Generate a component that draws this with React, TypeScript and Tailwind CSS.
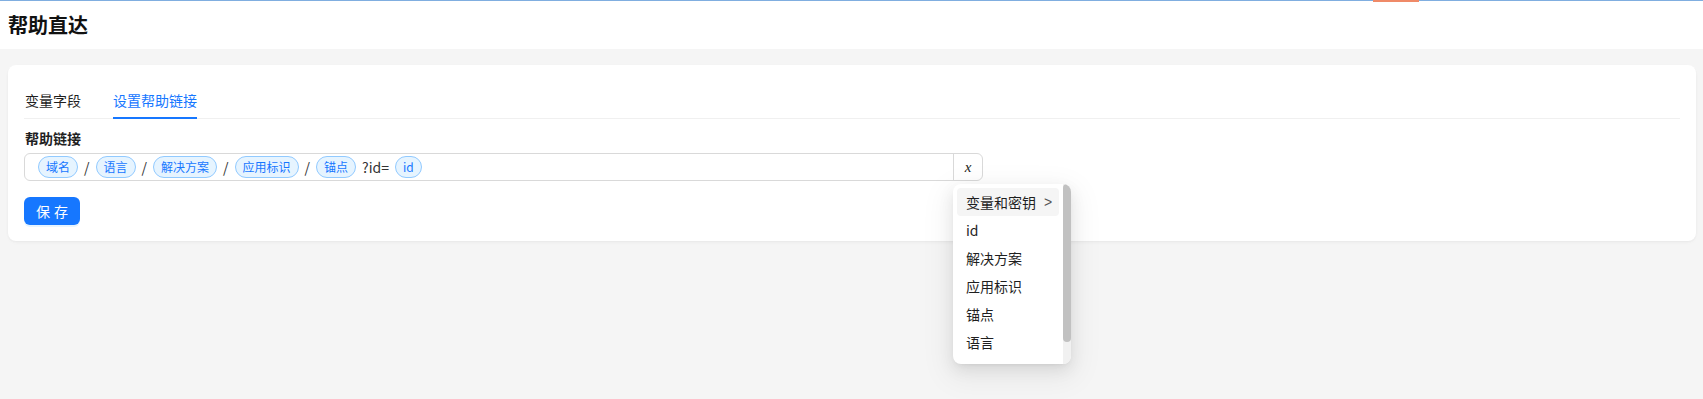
import React from "react";

const FONT = { fontFamily: '"Noto Sans CJK SC", "Noto Sans", sans-serif' };

function Tag({ children }: { children: React.ReactNode }) {
  return (
    <span className="inline-flex h-[22px] items-center rounded-full border border-[#91caff] bg-[#e6f4ff] px-[7px] text-[12px] leading-[20px] text-[#1677ff]">
      {children}
    </span>
  );
}

function Slash() {
  return <span className="text-[14px] leading-[22px] text-[#333]">/</span>;
}

const items = ["id", "解决方案", "应用标识", "锚点", "语言", "域名"];

export default function App() {
  return (
    <div className="min-h-screen bg-[#f5f5f5] text-[#1f1f1f]" style={FONT}>
      <div className="relative h-[49px] border-t border-[#80aee0] bg-white">
        <div className="absolute left-[1373px] top-[-1px] h-[2px] w-[46px] bg-[#ef8a68]" />
        <div className="flex h-full items-center pl-[8px] pb-[1px]">
          <h1 className="text-[20px] font-bold leading-[28px] text-[#111]">帮助直达</h1>
        </div>
      </div>

      <div className="pl-[8px] pr-[7px] pt-[16px]">
        <div className="rounded-[8px] bg-white px-[16px] pt-[16px] pb-[16px] shadow-[0_1px_2px_0_rgba(0,0,0,0.03),0_1px_6px_-1px_rgba(0,0,0,0.02),0_2px_4px_0_rgba(0,0,0,0.02)]">
          <div className="flex gap-[32px] border-b border-[#f0f0f0]">
            <div className="pl-[1px] pt-[8px] pb-[7px] text-[14px] leading-[22px] text-[#1f1f1f]">变量字段</div>
            <div className="-mb-px border-b-2 border-[#1677ff] pt-[8px] pb-[6px] text-[14px] leading-[22px] text-[#1677ff]">设置帮助链接</div>
          </div>

          <div className="pt-[8px] pl-[1px] text-[14px] font-bold leading-[22px] text-[#1f1f1f]">帮助链接</div>

          <div className="mt-[4px] flex h-[28px] w-[959px] rounded-[6px] border border-[#d9d9d9] bg-white">
            <div className="flex flex-1 items-center gap-[6px] pl-[13px]">
              <Tag>域名</Tag>
              <Slash />
              <Tag>语言</Tag>
              <Slash />
              <Tag>解决方案</Tag>
              <Slash />
              <Tag>应用标识</Tag>
              <Slash />
              <Tag>锚点</Tag>
              <span className="text-[14px] leading-[22px] text-[#333]">?id=</span>
              <Tag>id</Tag>
            </div>
            <div className="relative flex w-[29px] items-center justify-center border-l border-[#d9d9d9]">
              <span className="text-[15px] italic leading-[20px] text-[#222]" style={{ fontFamily: '"Liberation Serif", serif' }}>
                x
              </span>
              <div className="absolute left-[-1px] top-[30px] z-10 flex h-[180px] w-[118px] overflow-hidden rounded-[8px] bg-white shadow-[0_6px_16px_0_rgba(0,0,0,0.08),0_3px_6px_-4px_rgba(0,0,0,0.12),0_9px_28px_8px_rgba(0,0,0,0.05)]">
                <div className="flex flex-1 flex-col overflow-hidden p-[4px]">
                  <div className="flex h-[28px] shrink-0 items-center gap-[8px] rounded-[4px] bg-[#f5f5f5] pl-[9px] text-[14px] leading-[22px] text-[#1f1f1f]">
                    <span>变量和密钥</span>
                    <span className="text-[14px] text-[#555]" style={{ fontFamily: '"Liberation Sans", sans-serif' }}>&gt;</span>
                  </div>
                  {items.map((t) => (
                    <div key={t} className="flex h-[28px] shrink-0 items-center pl-[9px] text-[14px] leading-[22px] text-[#1f1f1f]">
                      {t}
                    </div>
                  ))}
                </div>
                <div className="w-[8px] bg-[#f1f1f1]">
                  <div className="h-[158px] rounded-[4px] bg-[#c1c1c1]" />
                </div>
              </div>
            </div>
          </div>

          <button className="mt-[16px] flex h-[28px] w-[56px] items-center justify-center rounded-[6px] bg-[#1677ff] text-[14px] leading-[22px] tracking-[4px] text-white shadow-[0_2px_0_rgba(5,145,255,0.1)]">
            <span className="pl-[4px]">保存</span>
          </button>
        </div>
      </div>
    </div>
  );
}
